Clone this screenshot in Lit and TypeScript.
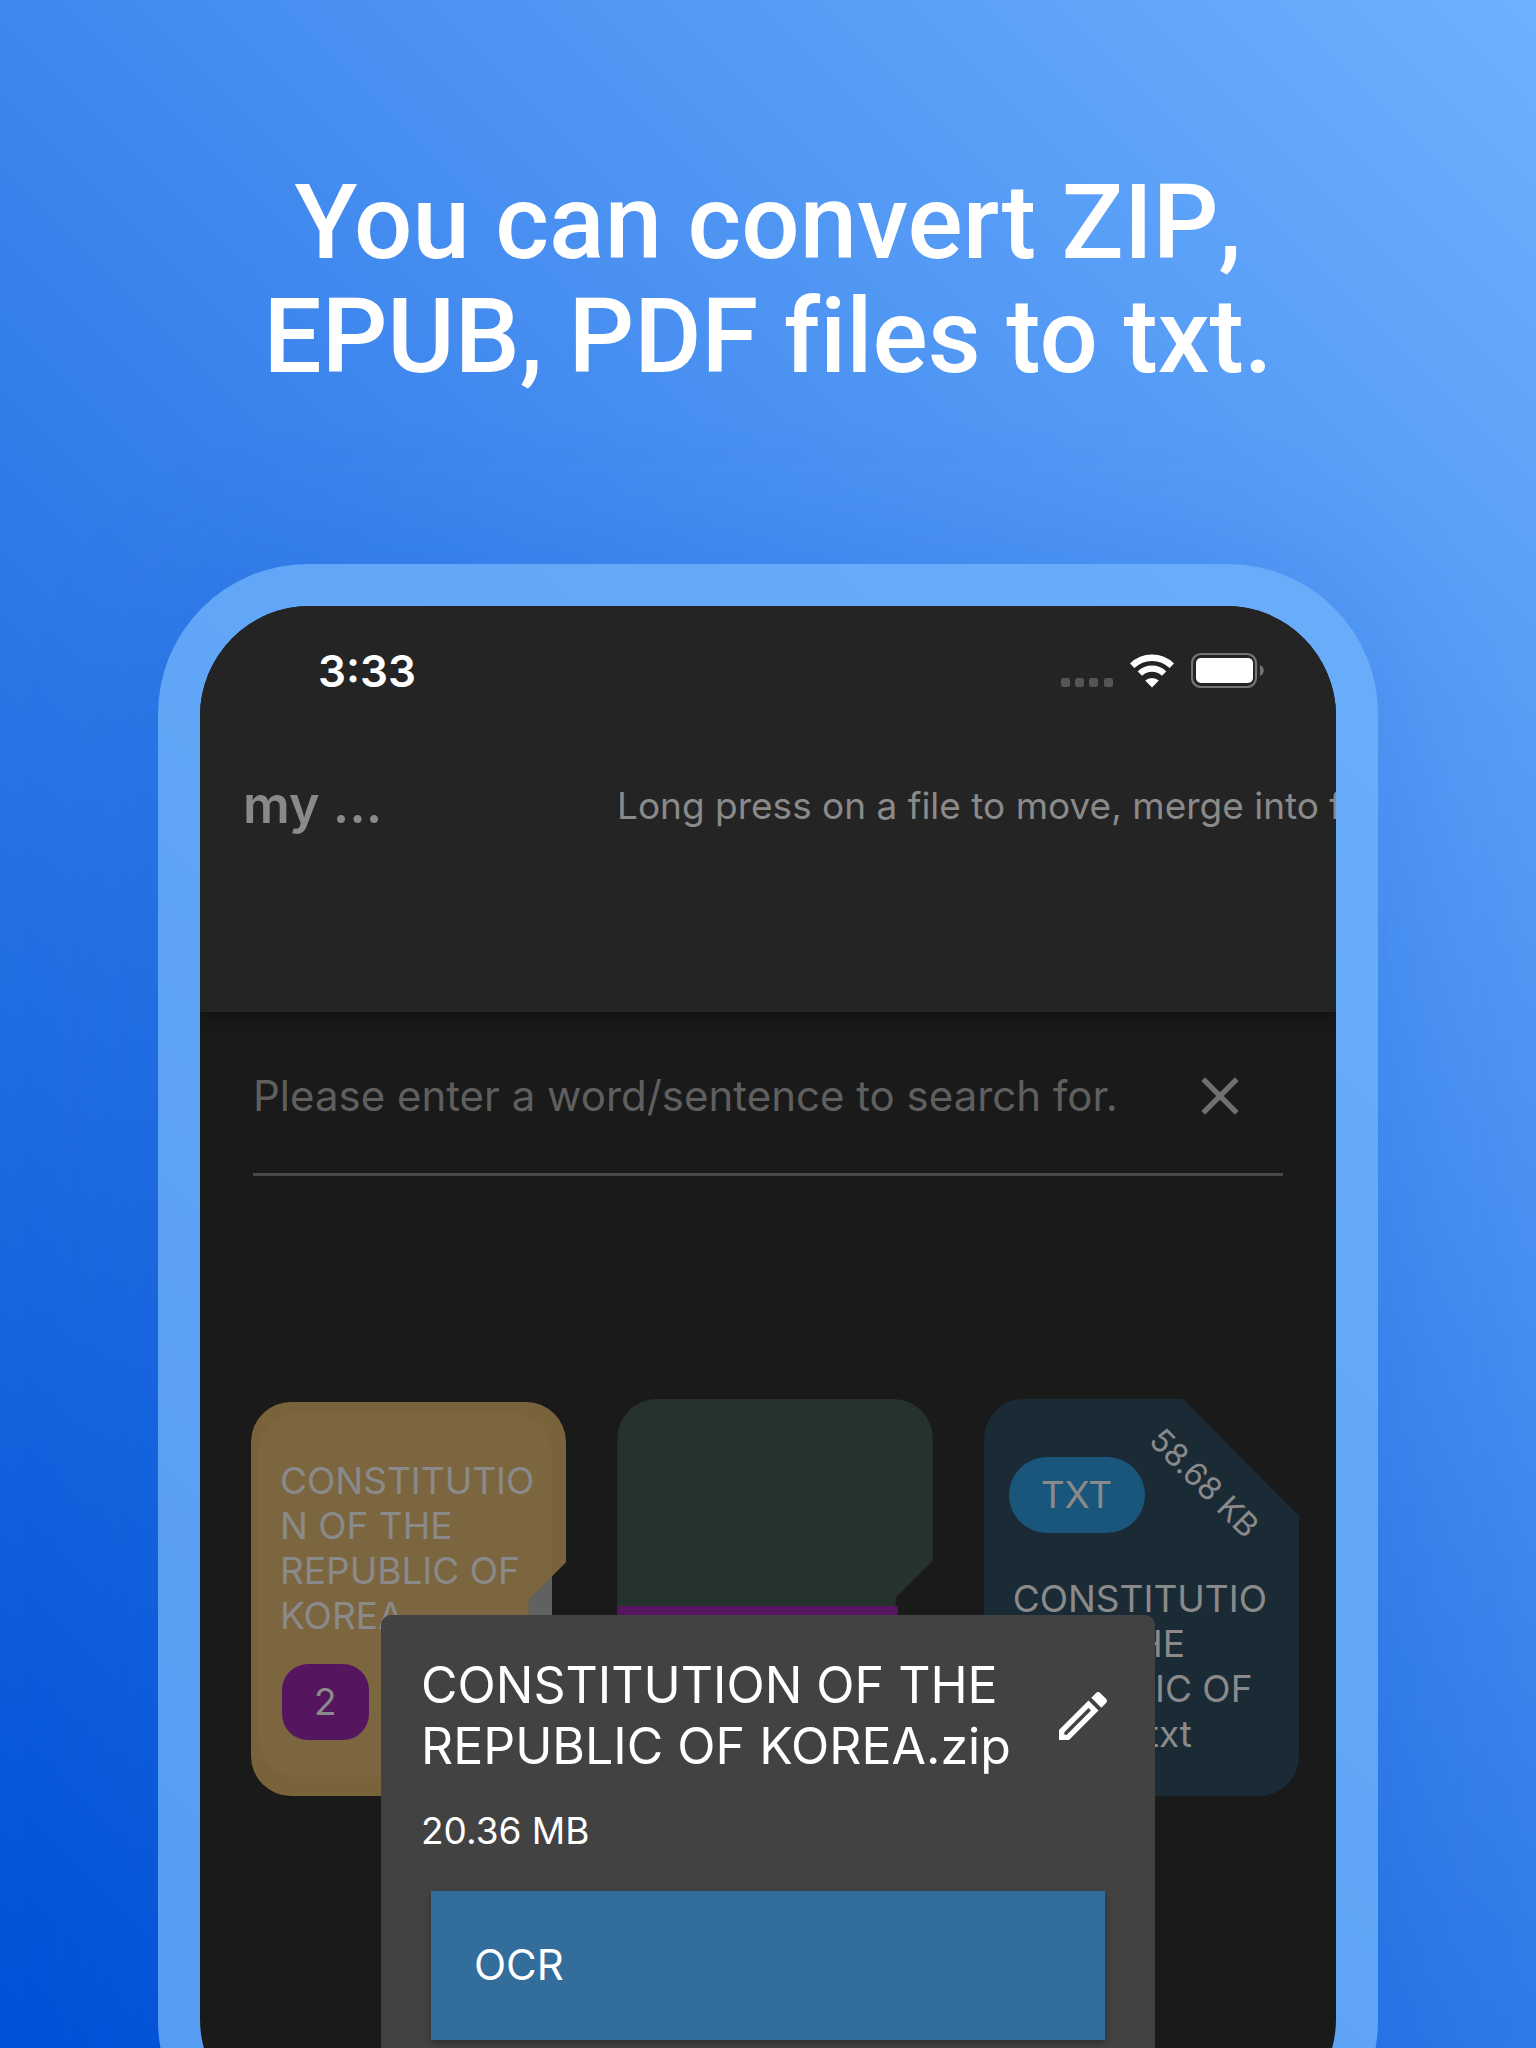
import { LitElement, html, css, svg } from "lit";
import { customElement, property } from "lit/decorators.js";

const editPath =
  "M14.06 9.02l.92.92L5.92 19H5v-.92l9.06-9.06M17.66 3c-.25 0-.51.1-.7.29l-1.83 1.83 3.75 3.75 1.83-1.83c.39-.39.39-1.02 0-1.41l-2.34-2.34c-.2-.2-.45-.29-.71-.29zm-3.6 3.19L3 17.25V21h3.75L17.81 9.94l-3.75-3.75z";
const closePath =
  "M19 6.41L17.59 5 12 10.59 6.41 5 5 6.41 10.59 12 5 17.59 6.41 19 12 13.41 17.59 19 19 17.59 13.41 12z";

@customElement("status-bar")
export class StatusBar extends LitElement {
  static styles = css`
    :host {
      display: flex;
      justify-content: space-between;
      align-items: flex-end;
      padding: 38px 72px 0 118px;
    }
    .time {
      font-size: 44px;
      line-height: 54px;
      font-weight: 600;
      color: #fff;
    }
    .icons {
      display: flex;
      align-items: flex-end;
      gap: 17px;
      padding-bottom: 10px;
    }
    .icons svg {
      display: block;
    }
  `;

  render() {
    return html`
      <span class="time">3:33</span>
      <div class="icons">
        <svg width="52" height="10" viewBox="0 0 52 10" fill="#555" aria-hidden="true">
          ${[0, 14, 28, 43].map((x) => svg`<rect x=${x} y="0" width="9" height="9" rx="2.5" />`)}
        </svg>
        <svg width="44" height="34" viewBox="0 0 44 34" fill="none" stroke="#fff" aria-hidden="true">
          <path d="M2.2 11.8A28.2 28.2 0 0 1 41.8 11.8" stroke-width="6.4" />
          <path d="M9.9 19.6A17.2 17.2 0 0 1 34.1 19.6" stroke-width="6.2" />
          <path d="M22 33.6L15.2 26.6A10 10 0 0 1 28.8 26.6Z" fill="#fff" stroke="none" />
        </svg>
        <svg width="73" height="36" viewBox="0 0 73 36" aria-hidden="true">
          <rect x="1" y="2" width="64" height="33" rx="9" fill="none" stroke="#737373" stroke-width="2.2" />
          <rect x="5" y="6" width="57" height="25" rx="5" fill="#fff" />
          <path d="M69 13c5 2 5 9 0 11z" fill="#737373" />
        </svg>
      </div>
    `;
  }
}

@customElement("file-card")
export class FileCard extends LitElement {
  @property() name = "";
  @property() kind = "";
  @property() size = "";

  static styles = css`
    :host {
      display: block;
    }
    .card {
      box-sizing: border-box;
      height: 100%;
      padding: 58px 20px 40px 25px;
      border-radius: 40px 0 40px 40px;
      background: #1b2b36;
      clip-path: polygon(0 0, calc(100% - 116px) 0, 100% 117px, 100% 100%, 0 100%);
    }
    .head {
      display: flex;
      align-items: center;
      margin-bottom: 43px;
    }
    .kind {
      padding: 0 33px 0 32px;
      border-radius: 38px;
      background: #1a567c;
      font-size: 37px;
      line-height: 76px;
    }
    .size {
      margin: -24px -14px 0 -10px;
      font-size: 32px;
      line-height: 38px;
      white-space: nowrap;
      transform: rotate(45deg);
    }
    .name {
      padding-left: 4px;
      font-size: 37px;
      line-height: 45px;
      overflow-wrap: anywhere;
    }
  `;

  render() {
    return html`
      <div class="card">
        <div class="head">
          <span class="kind">${this.kind}</span>
          <span class="size">${this.size}</span>
        </div>
        <div class="name">${this.name}</div>
      </div>
    `;
  }
}

@customElement("folder-card")
export class FolderCard extends LitElement {
  @property() name = "";
  @property({ type: Number }) count = 0;

  static styles = css`
    :host {
      display: grid;
      padding-top: 3px;
    }
    .sheet,
    .cover,
    .panel,
    .content {
      grid-area: 1 / 1;
    }
    .sheet,
    .panel {
      margin: 11px 14px 19px 7px;
      border-radius: 40px;
    }
    .sheet {
      background: #616161;
    }
    .panel {
      background: #7c6640;
    }
    .cover {
      display: grid;
      border-radius: 40px;
      background: #78633a;
      clip-path: polygon(0 0, 100% 0, 100% 160px, calc(100% - 38px) 198px, calc(100% - 38px) 100%, 0 100%);
    }
    .content {
      display: flex;
      flex-direction: column;
      align-items: flex-start;
      gap: 26px;
      padding: 56px 24px 53px 29px;
    }
    .name {
      font-size: 37px;
      line-height: 45px;
      overflow-wrap: anywhere;
    }
    .count {
      margin-left: 2px;
      padding: 0 32px;
      border-radius: 26px;
      background: #55165f;
      font-size: 37px;
      line-height: 76px;
    }
  `;

  render() {
    return html`
      <div class="sheet"></div>
      <div class="cover">
        <div class="panel"></div>
        <div class="content">
          <span class="name">${this.name}</span>
          <span class="count">${this.count}</span>
        </div>
      </div>
    `;
  }
}

@customElement("archive-card")
export class ArchiveCard extends LitElement {
  static styles = css`
    :host {
      display: block;
    }
    .card {
      display: flex;
      flex-direction: column;
      height: 100%;
      border-radius: 40px;
      background: #25332c;
      clip-path: polygon(0 0, 100% 0, 100% 162px, calc(100% - 37px) 199px, calc(100% - 37px) 207px, calc(100% - 35px) 207px, calc(100% - 35px) 100%, 0 100%);
    }
    .band {
      height: 76px;
      margin-top: 207px;
      background: #55165f;
    }
  `;

  render() {
    return html`<div class="card"><div class="band"></div></div>`;
  }
}

@customElement("app-root")
export class AppRoot extends LitElement {
  static styles = css`
    :host {
      display: flex;
      flex-direction: column;
      height: 100vh;
      overflow: hidden;
      background: linear-gradient(45deg, #0050d6, #6eb1ff);
      font-family: Inter, "Liberation Sans", sans-serif;
      color: #8a8a8a;
    }
    .headline {
      margin: 166px 0 170px;
      font-family: Roboto, sans-serif;
      font-size: 103px;
      line-height: 114px;
      font-weight: 500;
      font-variant-ligatures: none;
      text-align: center;
      color: #fff;
    }
    .format {
      font-kerning: none;
    }
    .phone {
      flex: none;
      margin: 0 158px;
      padding: 42px;
      border-radius: 150px;
      background: rgba(112, 179, 251, 0.76);
      box-shadow: 0 0 140px rgba(0, 84, 216, 0.18);
    }
    .screen {
      position: relative;
      overflow: hidden;
      border-radius: 110px;
      background: #1a1a1a;
    }
    .appbar {
      background: #242424;
      box-shadow: 0 4px 14px rgba(0, 0, 0, 0.4);
    }
    .titles {
      display: grid;
      grid-template-columns: 374px 1fr;
      align-items: center;
      padding: 75px 0 175px 43px;
    }
    .title {
      margin: 0;
      font-size: 52px;
      line-height: 64px;
      font-weight: 600;
    }
    .hint {
      overflow: hidden;
      font-size: 37px;
      line-height: 45px;
      white-space: nowrap;
    }
    .search {
      display: flex;
      align-items: center;
      margin: 52px 53px 223px;
      padding: 0 31px 45px 0;
      border-bottom: 3px solid #484848;
    }
    .field {
      flex: 1;
      min-width: 0;
      padding: 0;
      border: 0;
      outline: 0;
      background: none;
      font: 42px/50px Inter, "Liberation Sans", sans-serif;
      color: #8a8a8a;
    }
    .field::placeholder {
      color: #5f5f5f;
      opacity: 1;
    }
    button {
      border: 0;
      padding: 0;
      background: none;
      font-family: inherit;
      color: inherit;
      cursor: pointer;
    }
    button svg {
      display: block;
    }
    .clear {
      color: #707070;
    }
    .files {
      display: grid;
      grid-template-columns: repeat(3, minmax(0, 1fr));
      gap: 51px;
      padding: 0 37px 333px 51px;
    }
    .dialog {
      position: absolute;
      top: 1009px;
      left: 181px;
      right: 181px;
      padding: 40px 40px 140px;
      border-radius: 10px;
      background: #424242;
      color: #fff;
    }
    .dialog-head {
      display: flex;
      align-items: center;
      justify-content: space-between;
    }
    .dialog-title {
      margin: 0;
      font-size: 50px;
      line-height: 61px;
      font-weight: 400;
    }
    .edit {
      flex: none;
    }
    .filesize {
      margin: 31px 0 38px;
      font-size: 37px;
      line-height: 45px;
    }
    .action {
      display: block;
      width: calc(100% - 20px);
      margin: 0 10px;
      padding: 49px 43px 50px;
      background: #336d9b;
      box-shadow: 0 3px 6px rgba(0, 0, 0, 0.3);
      font-size: 42px;
      line-height: 50px;
      text-align: left;
      color: #fff;
    }
  `;

  render() {
    return html`
      <h1 class="headline">You can convert <span class="format">ZIP,</span><br />EPUB, PDF files to txt.</h1>
      <main class="phone">
        <div class="screen">
          <header class="appbar">
            <status-bar></status-bar>
            <div class="titles">
              <h2 class="title">my ...</h2>
              <div class="hint">Long press on a file to move, merge into f</div>
            </div>
          </header>
          <div class="search">
            <input
              class="field"
              type="text"
              aria-label="Search"
              placeholder="Please enter a word/sentence to search for."
            />
            <button class="clear" type="button" aria-label="Clear">
              <svg width="64" height="64" viewBox="0 0 24 24" fill="currentColor"><path d=${closePath} /></svg>
            </button>
          </div>
          <div class="files">
            <folder-card name="CONSTITUTION OF THE REPUBLIC OF KOREA" .count=${2}></folder-card>
            <archive-card></archive-card>
            <file-card kind="TXT" size="58.68 KB" name="CONSTITUTION OF THE REPUBLIC OF KOREA.txt"></file-card>
          </div>
          <section class="dialog" role="dialog" aria-labelledby="dialog-title">
            <div class="dialog-head">
              <h3 class="dialog-title" id="dialog-title">CONSTITUTION OF THE<br />REPUBLIC OF KOREA.zip</h3>
              <button class="edit" type="button" aria-label="Rename">
                <svg width="64" height="64" viewBox="0 0 24 24" fill="currentColor"><path d=${editPath} /></svg>
              </button>
            </div>
            <p class="filesize">20.36 MB</p>
            <button class="action" type="button">OCR</button>
          </section>
        </div>
      </main>
    `;
  }
}
